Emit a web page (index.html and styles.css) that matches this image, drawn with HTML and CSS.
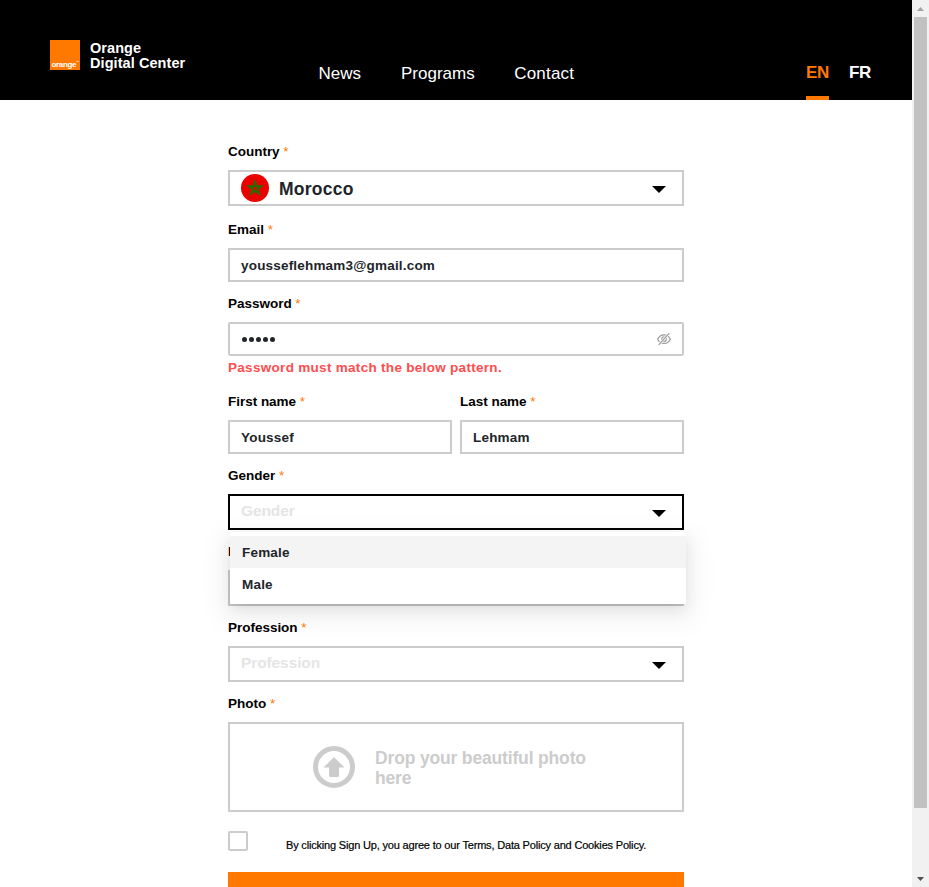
FILE: index.html
```html
<!DOCTYPE html>
<html lang="en">
<head>
<meta charset="utf-8">
<title>Orange Digital Center</title>
<link rel="stylesheet" href="styles.css">
</head>
<body>
<div class="page">
  <header class="header">
    <div class="brand">
      <div class="logo">orange<sup>™</sup></div>
      <div class="brand-name"><div>Orange</div><div>Digital Center</div></div>
    </div>
    <nav class="nav"><a>News</a><a>Programs</a><a class="nav-contact">Contact</a></nav>
    <div class="langs"><a class="lang active">EN</a><a class="lang">FR</a></div>
  </header>
  <main class="form">
    <div class="field country">
      <label>Country <i>*</i></label>
      <div class="box select">
        <svg class="flag" viewBox="0 0 28 28"><circle cx="14" cy="14" r="14" fill="#eb0000"/><path d="M14 7.2 L18.2 20 L7.2 12.1 H20.8 L9.8 20 Z" fill="none" stroke="#286b00" stroke-width="1.7"/></svg>
        <span class="country-name">Morocco</span>
        <svg class="caret" viewBox="0 0 14 7"><path d="M0 0H14L7 7Z"/></svg>
      </div>
    </div>
    <div class="field">
      <label>Email <i>*</i></label>
      <div class="box"><span class="value email">yousseflehmam3@gmail.com</span></div>
    </div>
    <div class="field password">
      <label>Password <i>*</i></label>
      <div class="box rounded">
        <span class="dots"><b></b><b></b><b></b><b></b><b></b></span>
        <svg class="eye" viewBox="0 0 14 14" fill="none" stroke="#999" stroke-width="1.2"><path d="M.6 7.2C3.4 1.3 10.6 1.3 13.4 7.2C10.6 12.8 3.4 12.8 .6 7.2Z"/><circle cx="7" cy="7.1" r="2.3"/><path d="M12.3 1.1L1.7 12.9" stroke="#fff" stroke-width="2.4"/><path d="M12.3 1.1L1.7 12.9"/></svg>
      </div>
      <div class="error">Password must match the below pattern.</div>
    </div>
    <div class="pair">
      <div class="field"><label>First name <i>*</i></label><div class="box"><span class="value">Youssef</span></div></div>
      <div class="field"><label>Last name <i>*</i></label><div class="box"><span class="value">Lehmam</span></div></div>
    </div>
    <div class="field gender">
      <label>Gender <i>*</i></label>
      <div class="box select focused"><span class="placeholder">Gender</span><svg class="caret" viewBox="0 0 14 7"><path d="M0 0H14L7 7Z"/></svg></div>
      <div class="menu"><div class="option selected">Female</div><div class="option">Male</div></div>
    </div>
    <div class="field">
      <label>L</label>
      <div class="box select"></div>
    </div>
    <div class="field">
      <label>Profession <i>*</i></label>
      <div class="box select"><span class="placeholder">Profession</span><svg class="caret" viewBox="0 0 14 7"><path d="M0 0H14L7 7Z"/></svg></div>
    </div>
    <div class="field photo">
      <label>Photo <i>*</i></label>
      <div class="box drop">
        <svg class="upload" viewBox="0 0 42 42"><circle cx="21" cy="21" r="18.5" fill="none" stroke="#ccc" stroke-width="5"/><path d="M21 11L31.5 21.5H26V29.5Q26 31 24.5 31H17.5Q16 31 16 29.5V21.5H10.5Z" fill="#ccc"/></svg>
        <div class="drop-text">Drop your beautiful photo<br>here</div>
      </div>
    </div>
    <div class="terms"><span class="check"></span><p>By clicking Sign Up, you agree to our Terms, Data Policy and Cookies Policy.</p></div>
    <div class="submit"></div>
  </main>
</div>
<div class="scrollbar">
  <svg class="arrow" viewBox="0 0 17 17"><path d="M5 11H12L8.5 7Z" fill="#a3a3a3"/></svg>
  <div class="thumb"></div>
  <svg class="arrow" viewBox="0 0 17 17"><path d="M5 7H12L8.5 11Z" fill="#505050"/></svg>
</div>
</body>
</html>
```
FILE: styles.css
```css
* { box-sizing: border-box; }
body { margin: 0; height: 887px; display: flex; overflow: hidden; background: #fff; color: #000; font-family: "Liberation Sans", Arial, sans-serif; }
.page { width: 912px; height: 887px; overflow: hidden; }
.header { height: 100px; background: #000; color: #fff; display: flex; padding-left: 50px; }
.brand { width: 268.5px; display: flex; gap: 10px; padding-top: 40px; }
.logo { width: 30px; height: 30px; background: #ff7900; font-size: 8px; line-height: 8px; font-weight: bold; letter-spacing: -.35px; padding: 21px 0 0 1.5px; white-space: nowrap; }
.logo sup { font-size: 3px; line-height: 0; vertical-align: 4px; }
.brand-name { padding-top: 1px; font-size: 14.5px; line-height: 15px; font-weight: bold; letter-spacing: .07px; white-space: nowrap; }
.nav { display: flex; gap: 40px; padding-top: 64px; font-size: 17px; line-height: 20px; width: 487.5px; }
.nav-contact { letter-spacing: .2px; margin-left: -.5px; }
.langs { display: flex; gap: 20px; font-weight: bold; font-size: 17px; }
.lang { height: 100px; padding-top: 63px; line-height: 20px; letter-spacing: -.3px; }
.active { color: #ff7900; border-bottom: 4px solid #ff7900; }
.form { width: 456px; margin: 40px 0 0 228px; }
.field { margin-bottom: 10px; position: relative; }
.country, .password { margin-bottom: 12px; }
label { display: block; height: 22px; margin-bottom: 8px; font-size: 13.5px; line-height: 24px; font-weight: bold; letter-spacing: -.02px; white-space: nowrap; }
label i { font-style: normal; color: #ff7900; font-weight: normal; }
.box { height: 34px; border: 2px solid #ccc; padding: 0 11px; display: flex; align-items: center; }
.select { height: 36px; }
.rounded { border-radius: 2px; }
.flag { width: 28px; height: 28px; margin-right: 10px; }
.country-name { font-size: 17.5px; letter-spacing: .25px; font-weight: bold; color: #212529; line-height: 22px; padding-top: 1px; }
.caret { width: 14px; height: 7px; margin: 3px 5px 0 auto; }
.value, .option { font-size: 13.5px; font-weight: bold; color: #212529; letter-spacing: .19px; }
.dots { display: flex; gap: 2px; padding-left: 1px; }
.dots b { width: 5px; height: 5px; border-radius: 50%; background: #212529; }
.eye { width: 14px; height: 14px; margin-left: auto; }
.error { height: 22px; font-size: 13.5px; font-weight: bold; line-height: 23px; color: #ff4d4f; letter-spacing: .3px; white-space: nowrap; }
.pair { display: grid; grid-template-columns: 1fr 1fr; gap: 8px; }
.focused { border-color: #000; }
.placeholder { font-size: 15.5px; font-weight: bold; color: #e5e5e5; letter-spacing: -.1px; line-height: 20px; margin-top: -2px; }
.menu { position: absolute; z-index: 2; left: 2px; top: 68px; width: 456px; height: 72px; padding: 4px 0; background: #fff; border-radius: 2px; box-shadow: 0 3px 6px -4px rgba(0,0,0,.12), 0 6px 16px rgba(0,0,0,.08), 0 9px 28px 8px rgba(0,0,0,.05); }
.option { height: 32px; padding-left: 12px; line-height: 33px; }
.selected { background: #f4f4f4; }
.drop { height: 90px; padding-left: 83px; }
.upload { width: 42px; height: 42px; margin-right: 20px; }
.drop-text { font-size: 17.5px; line-height: 20px; font-weight: bold; color: #ccc; letter-spacing: -.16px; white-space: nowrap; padding-top: 2px; }
.photo { margin-bottom: 19px; }
.terms { height: 41px; display: flex; gap: 38px; }
.check { width: 20px; height: 20px; border: 2px solid #ccc; border-radius: 2px; }
.terms p { margin: 4px 0 0; font-size: 11px; line-height: 20px; letter-spacing: -.18px; white-space: nowrap; -webkit-text-stroke: .2px #000; }
.submit { height: 40px; background: #ff7900; }
.scrollbar { width: 17px; height: 887px; background: #f1f1f1; display: flex; flex-direction: column; align-items: center; }
.arrow { width: 17px; height: 17px; flex: none; }
.thumb { width: 13px; height: 791px; background: #c1c1c1; margin-bottom: 62px; flex: none; }
```
